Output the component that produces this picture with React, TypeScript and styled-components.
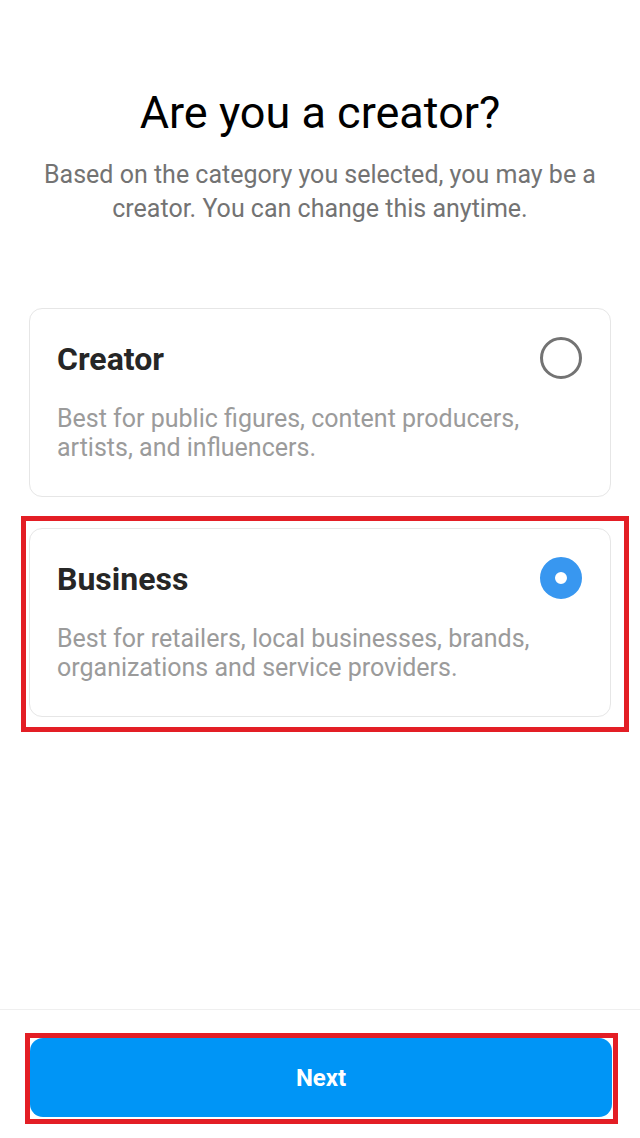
import React, { useState } from "react";
import styled, { createGlobalStyle } from "styled-components";

const Global = createGlobalStyle`
  html, body { margin: 0; padding: 0; background: #fff; }
  body { font-family: Roboto, "Noto Sans", Arial, sans-serif; -webkit-font-smoothing: antialiased; }
  * { box-sizing: border-box; }
`;

const Screen = styled.div`
  width: 640px;
  height: 1138px;
  display: flex;
  flex-direction: column;
  background: #fff;
`;

const Content = styled.div`
  flex: 1;
  display: flex;
  flex-direction: column;
  padding: 85px 29px 0 29px;
`;

const Title = styled.h1`
  margin: 0;
  text-align: center;
  font-size: 45px;
  font-weight: 400;
  line-height: 56px;
  color: #000;
`;

const Subtitle = styled.p`
  margin: 17px 0 0;
  text-align: center;
  font-size: 25px;
  line-height: 34px;
  color: #737373;
`;

const Options = styled.div`
  margin-top: 82px;
  display: flex;
  flex-direction: column;
  gap: 31px;
`;

const CardWrap = styled.div`
  position: relative;
`;

const Highlight = styled.div<{ $inset: string }>`
  position: absolute;
  inset: ${(p) => p.$inset};
  border: 5px solid #e31e25;
  pointer-events: none;
`;

const Card = styled.button`
  all: unset;
  box-sizing: border-box;
  display: flex;
  width: 100%;
  height: 189px;
  padding: 32px 28px 0 27px;
  border: 1.5px solid #e6e6e6;
  border-radius: 13px;
  background: #fff;
  cursor: pointer;
`;

const CardText = styled.div`
  flex: 1;
  display: flex;
  flex-direction: column;
`;

const CardTitle = styled.div`
  font-size: 32px;
  font-weight: 700;
  line-height: 36px;
  color: #262626;
`;

const CardDesc = styled.div`
  margin-top: 27px;
  font-size: 25px;
  line-height: 29px;
  color: #9b9b9b;
`;

const Radio = styled.span<{ $checked: boolean }>`
  flex: none;
  width: 42px;
  height: 42px;
  margin-top: -4px;
  border-radius: 50%;
  border: ${(p) => (p.$checked ? "15px solid #3897f0" : "3px solid #737373")};
  background: #fff;
`;

const Footer = styled.div`
  border-top: 1px solid #efefef;
  padding: 28px 28px 21px 30px;
`;

const ButtonWrap = styled.div`
  position: relative;
`;

const NextButton = styled.button`
  all: unset;
  box-sizing: border-box;
  display: flex;
  align-items: center;
  justify-content: center;
  width: 100%;
  height: 79px;
  border-radius: 13px;
  background: #0095f6;
  color: #fff;
  font-size: 24px;
  font-weight: 700;
  cursor: pointer;
`;

const options = [
  {
    id: "creator",
    title: "Creator",
    desc: ["Best for public figures, content producers,", "artists, and influencers."],
  },
  {
    id: "business",
    title: "Business",
    desc: ["Best for retailers, local businesses, brands,", "organizations and service providers."],
  },
];

export default function App() {
  const [selected, setSelected] = useState("business");
  return (
    <Screen>
      <Global />
      <Content>
        <Title>Are you a creator?</Title>
        <Subtitle>
          Based on the category you selected, you may be a
          <br />
          creator. You can change this anytime.
        </Subtitle>
        <Options>
          {options.map((o) => (
            <CardWrap key={o.id}>
              <Card onClick={() => setSelected(o.id)}>
                <CardText>
                  <CardTitle>{o.title}</CardTitle>
                  <CardDesc>
                    {o.desc[0]}
                    <br />
                    {o.desc[1]}
                  </CardDesc>
                </CardText>
                <Radio $checked={selected === o.id} />
              </Card>
              {o.id === "business" && <Highlight $inset="-12px -18px -15px -8px" />}
            </CardWrap>
          ))}
        </Options>
      </Content>
      <Footer>
        <ButtonWrap>
          <NextButton>Next</NextButton>
          <Highlight $inset="-5px -6px -7px -5px" />
        </ButtonWrap>
      </Footer>
    </Screen>
  );
}
